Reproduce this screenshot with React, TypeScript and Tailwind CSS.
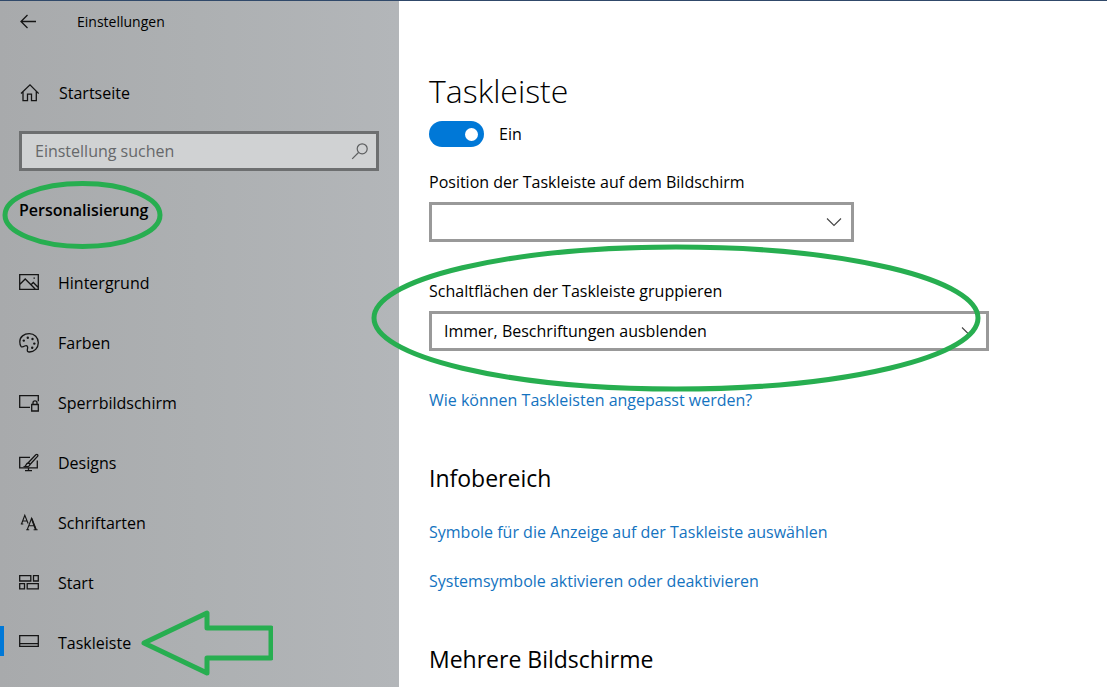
import { useState, type ReactNode } from "react";

type IconProps = { children: ReactNode };

function Icon({ children }: IconProps) {
  return (
    <svg
      viewBox="0 0 20 20"
      className="size-5 shrink-0"
      fill="none"
      stroke="#151515"
      strokeWidth="1.3"
      aria-hidden="true"
    >
      {children}
    </svg>
  );
}

const navItems: { label: string; icon: ReactNode }[] = [
  {
    label: "Hintergrund",
    icon: (
      <Icon>
        <path d="M.7 1.7h18.600v14.600H.7zM.7 11.500 6.200 6l10 10M12 11.800l2.300-2.300 5 5" />
        <path d="M14.500 4.500h1.400v1.300h-1.400z" fill="#151515" stroke="none" />
      </Icon>
    ),
  },
  {
    label: "Farben",
    icon: (
      <Icon>
        <path d="M.8 8.800C.8 3.800 5 .7 10.200.7c5.200 0 9.100 3.800 9.100 9 0 5.300-4 9.300-8.900 9.300-1.500 0-2.300-.8-2.100-2.200.2-1.500.8-2.300.1-3.400-.6-1-1.700-.9-2.700-.4-1.600.9-2.700 1.200-3.700.4C1.200 12.600.8 10.500.8 8.800Z" />
        <g fill="#151515" stroke="none">
          <circle cx="4.800" cy="7.600" r="1.200" />
          <circle cx="8.800" cy="4.800" r="1.200" />
          <circle cx="13.500" cy="6" r="1.200" />
          <circle cx="15.300" cy="10.600" r="1.200" />
          <circle cx="13.200" cy="14.800" r="1.200" />
        </g>
      </Icon>
    ),
  },
  {
    label: "Sperrbildschirm",
    icon: (
      <Icon>
        <path d="M11 14.300H.7V2.700h18.600v5.500M12.700 11.500h6.600v6.500H12.700zM14 11.500V9.800a2 2 0 0 1 4 0v1.700" />
      </Icon>
    ),
  },
  {
    label: "Designs",
    icon: (
      <Icon>
        <path d="M11 4.300H.7v10.600h17.600V7.500M9.500 14.900v2.800M6 17.700h7" />
        <path d="m9 10 7.800-8.300c1.500-1 2.600.3 1.700 1.700L11 11.500M9 10c1 .1 1.800.7 2 1.500-.3 2-2.300 2.500-5.200 2 1.300-.7 1.200-3 3.200-3.500Z" />
      </Icon>
    ),
  },
  {
    label: "Schriftarten",
    icon: (
      <Icon>
        <path
          d="m2.500 11 3.300-8.700L9.100 10.500M3.500 8h4.400M1.800 11h2.500M8.300 16.500l4.300-11.200 4.300 11.200M9.700 12.800h5.700M7.200 16.700h3M14.600 16.700h4"
          strokeWidth="1.1"
        />
        <path d="m12.600 5.500 4.200 11" strokeWidth="1.700" />
      </Icon>
    ),
  },
  {
    label: "Start",
    icon: (
      <Icon>
        <path d="M.7 2.700h11.100v5.300H.7zM14.500 2.700h4.800v5.300h-4.800zM.7 10.700h4.800v5.200H.7zM8.200 10.700h11.100v5.200H8.200z" />
      </Icon>
    ),
  },
  {
    label: "Taskleiste",
    icon: (
      <Icon>
        <path d="M.7 2.700h18.600v10.600H.7zM.7 10.700h18.600" />
      </Icon>
    ),
  },
];

function Chevron() {
  return (
    <svg
      viewBox="0 0 16 10"
      className="pointer-events-none absolute top-1/2 right-3 h-[10px] w-4 -translate-y-1/2"
      fill="none"
      stroke="#444"
      strokeWidth="1.1"
      aria-hidden="true"
    >
      <path d="m1 1.500 7 7 7-7" />
    </svg>
  );
}

type SelectFieldProps = {
  id: string;
  label: string;
  widthClass: string;
  options: string[];
};

function SelectField({ id, label, widthClass, options }: SelectFieldProps) {
  return (
    <div className={widthClass}>
      <label htmlFor={id} className="block leading-6">
        {label}
      </label>
      <div className="relative mt-2">
        <select
          id={id}
          className="block h-10 w-full appearance-none border-3 border-[#999] bg-white pr-10 pl-3"
        >
          {options.map((option) => (
            <option key={option}>{option}</option>
          ))}
        </select>
        <Chevron />
      </div>
    </div>
  );
}

function Sidebar() {
  const [active, setActive] = useState("Taskleiste");
  return (
    <aside className="w-[399px] shrink-0 bg-linear-to-r from-[#a8aaac] via-[#adb0b2] to-[#b3b6b9]">
      <header className="flex h-[42px] items-center gap-[38px] pl-[19px] text-sm">
        <button type="button" aria-label="Zurück">
          <Icon>
            <path d="M17 9.500H2M8.500 3 2 9.500 8.500 16" />
          </Icon>
        </button>
        <span>Einstellungen</span>
      </header>

      <a href="#startseite" className="mt-[30px] flex h-10 items-center gap-5 pl-[19px]">
        <Icon>
          <path d="m2 10.500 9-8.700 8.700 8.700M4 8.500v9.200h4.500v-6.500h4v6.500h4.800V8.500" />
        </Icon>
        Startseite
      </a>

      <div className="relative mt-[18px] mr-5 ml-[19px]">
        <input
          type="search"
          aria-label="Einstellung suchen"
          placeholder="Einstellung suchen"
          className="block h-10 w-full border-3 border-[#6d6f70] bg-[#d0d2d3] pr-10 pl-[13px] placeholder:text-[#66686a]"
        />
        <svg
          viewBox="0 0 18 18"
          className="pointer-events-none absolute top-[11px] right-[10px] size-[18px]"
          fill="none"
          stroke="#5d5f60"
          strokeWidth="1.2"
          aria-hidden="true"
        >
          <circle cx="11.200" cy="6.800" r="5" />
          <path d="M7.500 10.500 1.200 16.800" />
        </svg>
      </div>

      <div className="relative mt-[19px] ml-[19px] flex h-10 w-fit items-center">
        <h2 className="font-semibold">Personalisierung</h2>
        <svg
          viewBox="0 0 162 70"
          className="pointer-events-none absolute -top-[10px] -left-[18px] h-[70px] w-[162px]"
          fill="none"
          stroke="#27ae50"
          strokeWidth="5"
          aria-hidden="true"
        >
          <ellipse cx="81.500" cy="35" rx="77.500" ry="31.500" />
        </svg>
      </div>

      <nav className="mt-[23px] pb-3" aria-label="Personalisierung">
        {navItems.map(({ label, icon }) => (
          <a
            key={label}
            href={"#" + label.toLowerCase()}
            aria-current={active === label ? "page" : undefined}
            onClick={() => setActive(label)}
            className="flex h-[60px] items-center"
          >
            <span
              className={
                active === label ? "mb-1 h-[30px] w-1 bg-[#0078d7]" : "mb-1 h-[30px] w-1"
              }
            />
            <span className="ml-[15px] flex items-center gap-[19px]">
              {icon}
              <span className="relative">
                {label}
                {label === "Taskleiste" && (
                  <svg
                    viewBox="0 0 134 68"
                    className="pointer-events-none absolute top-1/2 left-full ml-2 h-[68px] w-[134px] -translate-y-1/2"
                    fill="none"
                    stroke="#27ae50"
                    strokeWidth="5"
                    aria-hidden="true"
                  >
                    <path d="M5 34 68 4v15h64v30H68v15Z" strokeLinejoin="round" />
                  </svg>
                )}
              </span>
            </span>
          </a>
        ))}
      </nav>
    </aside>
  );
}

function SettingsLink({ children }: { children: ReactNode }) {
  return (
    <a href="#hilfe" className="block w-fit leading-6 text-[#1473c0]">
      {children}
    </a>
  );
}

export default function App() {
  const [enabled, setEnabled] = useState(true);
  return (
    <div className="flex min-h-screen border-t border-[#30496a] bg-white font-['Open_Sans','Noto_Sans',sans-serif] text-base text-black">
      <Sidebar />
      <main className="min-w-0 flex-1 pt-[66px] pl-[30px]">
        <h1 className="text-[32px] leading-[48px] font-light">Taskleiste</h1>

        <label className="mt-[6px] flex w-fit items-center gap-[15px] leading-[26px]">
          <input
            type="checkbox"
            role="switch"
            checked={enabled}
            onChange={(event) => setEnabled(event.target.checked)}
            className="peer sr-only"
          />
          <span className="flex h-[26px] w-[55px] items-center justify-start rounded-full bg-[#999] px-[6px] peer-checked:justify-end peer-checked:bg-[#0078d7]">
            <span className="size-[13px] rounded-full bg-white" />
          </span>
          {enabled ? "Ein" : "Aus"}
        </label>

        <div className="mt-[23px]">
          <SelectField
            id="position"
            label="Position der Taskleiste auf dem Bildschirm"
            widthClass="w-[425px]"
            options={["", "Links", "Oben", "Rechts", "Unten"]}
          />
        </div>

        <div className="relative mt-[37px]">
          <SelectField
            id="gruppieren"
            label="Schaltflächen der Taskleiste gruppieren"
            widthClass="w-[560px]"
            options={["Immer, Beschriftungen ausblenden", "Wenn die Taskleiste voll ist", "Nie"]}
          />
          <svg
            viewBox="0 0 610 148"
            className="pointer-events-none absolute -top-[35px] -left-[58px] h-[148px] w-[610px]"
            fill="none"
            stroke="#27ae50"
            strokeWidth="5"
            aria-hidden="true"
          >
            <ellipse cx="305" cy="74" rx="302" ry="71" />
          </svg>
        </div>

        <div className="mt-[37px]">
          <SettingsLink>Wie können Taskleisten angepasst werden?</SettingsLink>
        </div>

        <section className="mt-[50px]">
          <h2 className="text-[23px] leading-8">Infobereich</h2>
          <div className="mt-[26px] flex flex-col gap-[25px]">
            <SettingsLink>Symbole für die Anzeige auf der Taskleiste auswählen</SettingsLink>
            <SettingsLink>Systemsymbole aktivieren oder deaktivieren</SettingsLink>
          </div>
        </section>

        <section className="mt-[50px]">
          <h2 className="text-[23px] leading-8">Mehrere Bildschirme</h2>
        </section>
      </main>
    </div>
  );
}
